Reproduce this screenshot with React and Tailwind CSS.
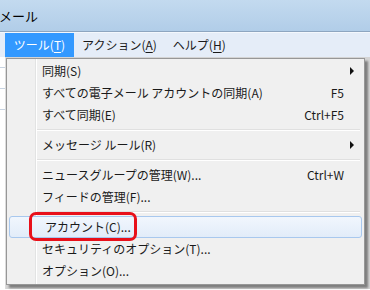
import { Fragment } from 'react';

const items = [
  { label: '同期(S)', arrow: true },
  { label: 'すべての電子メール アカウントの同期(A)', key: 'F5' },
  { label: 'すべて同期(E)', key: 'Ctrl+F5' },
  { sep: true },
  { label: 'メッセージ ルール(R)', arrow: true },
  { sep: true },
  { label: 'ニュースグループの管理(W)...', key: 'Ctrl+W' },
  { label: 'フィードの管理(F)...' },
  { sep: true },
  { label: 'アカウント(C)...', active: true },
  { label: 'セキュリティのオプション(T)...' },
  { label: 'オプション(O)...' },
];

const Mn = ({ children }) => <span className="underline underline-offset-2">{children}</span>;

function Row({ item }) {
  if (item.sep) {
    return (
      <div className="h-[8px] flex items-center pl-[30px] pr-[4px]">
        <div className="w-full h-[2px] border-t border-[#e0e0e0] border-b border-b-white" />
      </div>
    );
  }
  return (
    <div
      className={`relative h-[22px] flex items-center pl-[35px] pr-[20px] ${
        item.active ? 'mx-[2px] rounded-[3px] border border-[#a8c8ee] bg-gradient-to-b from-[#f1f6fd] to-[#e2ecf9] pl-[32px] pr-[17px]' : ''
      }`}
    >
      <span className="flex-1 whitespace-nowrap">{item.label}</span>
      {item.key && <span className="whitespace-nowrap">{item.key}</span>}
      {item.arrow && (
        <span className="w-0 h-0 border-y-[4px] border-y-transparent border-l-[4px] border-l-[#111] mr-[-10px]" />
      )}
    </div>
  );
}

export default function App() {
  return (
    <div className="relative w-[370px] h-[290px] overflow-hidden bg-white text-[12px] text-[#1a1a1a] font-['Noto_Sans_CJK_JP','Noto_Sans',sans-serif]">
      <div className="h-[32px] border-b border-[#8ea6c0] bg-gradient-to-b from-[#c3daef] to-[#b1cde8] flex items-center">
        <span className="ml-[-1px] text-[13px] text-black">メール</span>
      </div>
      <div className="h-[25px] bg-[#e5edf8] border-t border-[#f4f8fd] flex items-stretch text-[#1a1a1a]">
        <div className="ml-[5px] w-[69px] bg-[#3399ff] text-white flex items-center justify-center">
          ツール(<Mn>T</Mn>)
        </div>
        <div className="ml-[8px] flex items-center">アクション(<Mn>A</Mn>)</div>
        <div className="ml-[16px] flex items-center">ヘルプ(<Mn>H</Mn>)</div>
      </div>
      <div className="h-[232px] flex">
        <div className="w-[6px] bg-white border-r border-[#dcdcdc] flex flex-col gap-[20px] pt-[10px]">
          <div className="h-[1px] bg-[#c8d4e2]" />
          <div className="h-[1px] bg-[#c8d4e2]" />
          <div className="h-[1px] bg-[#c8d4e2]" />
        </div>
        <div className="flex-1 bg-[#d4d4d4]" />
      </div>

      {/* dropdown menu */}
      <div className="absolute left-[6px] top-[58px] w-[359px] h-[227px] bg-[#f0f0f0] border border-[#979797] shadow-[3px_3px_2px_rgba(0,0,0,0.4)] py-[1px]">
        <div className="absolute left-[28px] top-0 bottom-0 w-[2px] border-l border-[#e2e3e3] border-r border-r-white" />
        {items.map((it, i) => (
          <Fragment key={i}>
            <Row item={it} />
          </Fragment>
        ))}
      </div>

      {/* red highlight around アカウント */}
      <div className="absolute left-[29px] top-[212px] w-[108px] h-[29px] rounded-[7px] border-[3px] border-[#e8101a]" />
    </div>
  );
}
